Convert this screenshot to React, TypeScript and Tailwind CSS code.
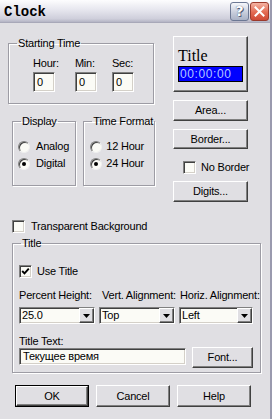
import React from 'react';

const raised =
  'border border-t-white border-l-white border-b-[#404040] border-r-[#404040] shadow-[inset_-1px_-1px_0_#808080]';
const sunken =
  'border border-t-[#808080] border-l-[#808080] border-b-white border-r-white shadow-[inset_1px_1px_0_#404040,inset_-1px_-1px_0_#d4d0c8]';
const etched = 'border border-[#9d9ca4] shadow-[1px_1px_0_#ffffff,inset_1px_1px_0_#ffffff]';

function Button({
  children,
  className = '',
  isDefault = false,
}: {
  children: React.ReactNode;
  className?: string;
  isDefault?: boolean;
}) {
  if (isDefault) {
    return (
      <div className={`border border-black ${className}`}>
        <button type="button" className={`w-full h-full flex items-center justify-center bg-[#e0dfe3] ${raised}`}>
          {children}
        </button>
      </div>
    );
  }
  return (
    <button type="button" className={`flex items-center justify-center bg-[#e0dfe3] ${raised} ${className}`}>
      {children}
    </button>
  );
}

function Check({ checked = false }: { checked?: boolean }) {
  return (
    <span className={`w-[13px] h-[13px] shrink-0 bg-[#fbfbf6] flex items-center justify-center ${sunken}`}>
      {checked && (
        <svg width="9" height="9" viewBox="0 0 9 9">
          <polyline points="1.2,4 3.5,6.4 7.8,1.6" fill="none" stroke="black" strokeWidth="1.9" />
        </svg>
      )}
    </span>
  );
}

function Radio({ label, checked = false, gap }: { label: string; checked?: boolean; gap: string }) {
  return (
    <div className={`flex items-center h-[13px] ${gap}`}>
      <span className="w-[12px] h-[12px] shrink-0 rounded-full bg-[#fbfbf6] border border-t-[#808080] border-l-[#808080] border-b-[#f0f0f0] border-r-[#f0f0f0] shadow-[inset_1px_1px_0_#404040] flex items-center justify-center">
        {checked && <span className="w-[4px] h-[4px] rounded-full bg-black" />}
      </span>
      <span>{label}</span>
    </div>
  );
}

function Field({ value, className = '' }: { value: string; className?: string }) {
  return (
    <div className={`bg-[#fbfbf6] flex items-center pl-[3px] ${sunken} ${className}`}>
      {value}
    </div>
  );
}

function Combo({ value, className = '' }: { value: string; className?: string }) {
  return (
    <div className={`h-[17px] bg-[#fbfbf6] flex items-stretch ${sunken} ${className}`}>
      <span className="flex-1 flex items-center pl-[2px]">{value}</span>
      <span className={`w-[15px] bg-[#e0dfe3] flex items-center justify-center ${raised}`}>
        <svg width="7" height="4" viewBox="0 0 7 4">
          <polygon points="0,0 7,0 3.5,4" fill="black" />
        </svg>
      </span>
    </div>
  );
}

function Group({
  title,
  className = '',
  inner = '',
  children,
}: {
  title: string;
  className?: string;
  inner?: string;
  children: React.ReactNode;
}) {
  return (
    <fieldset className={`${etched} ${className}`}>
      <legend className="ml-[8px] px-[1px] leading-[13px]">{title}</legend>
      <div className={inner}>{children}</div>
    </fieldset>
  );
}

export default function App() {
  return (
    <div className="w-[272px] h-[419px] overflow-hidden flex flex-col bg-[#e0dfe3] border-r-2 border-r-[#9a9aae] font-['Liberation_Sans',Arial,sans-serif] text-[11px] leading-[13px] tracking-[-0.2px] whitespace-nowrap text-black">
      {/* Title bar */}
      <div className="h-[23px] shrink-0 flex items-center justify-between pl-[4px] pr-[1px] bg-[linear-gradient(#fdfdfe,#e6e6ee_45%,#cfcfdb_85%,#b4b4c4)] border-b border-b-[#a8a8b8]">
        <span className="font-['Liberation_Mono',monospace] font-bold text-[14px] leading-[16px] tracking-normal mt-[1px]">Clock</span>
        <div className="flex items-center gap-[1px]">
          <span className="w-[19px] h-[19px] rounded-[3px] border border-[#6c7894] bg-[linear-gradient(#f6f7fb,#c4cad9_60%,#aab2c6)] flex items-center justify-center text-white font-bold text-[14px] font-['DejaVu_Sans',sans-serif] [text-shadow:0_0_1px_#2d3a5a,1px_1px_0_#56607a]">
            ?
          </span>
          <span className="w-[19px] h-[19px] rounded-[3px] border border-[#9c3a2c] bg-[linear-gradient(#f4b3a3,#e36a52_55%,#cf4a36)] flex items-center justify-center">
            <svg width="11" height="11" viewBox="0 0 11 11">
              <path d="M1.5 1.5 L9.5 9.5 M9.5 1.5 L1.5 9.5" stroke="white" strokeWidth="2" strokeLinecap="square" />
            </svg>
          </span>
        </div>
      </div>

      {/* Top section */}
      <div className="flex items-start mt-[13px]">
        <div className="ml-[8px] w-[147px] mt-[1px] flex flex-col">
          <Group title="Starting Time" className="w-[146px]" inner="pl-[24px] pt-[7px] pb-[11px]">
            <div className="flex">
              <div className="flex flex-col">
                <span>Hour:</span>
                <Field value="0" className="mt-[2px] w-[22px] h-[20px]" />
              </div>
              <div className="flex flex-col ml-[16px]">
                <span>Min:</span>
                <Field value="0" className="mt-[2px] w-[22px] h-[20px]" />
              </div>
              <div className="flex flex-col ml-[15px]">
                <span>Sec:</span>
                <Field value="0" className="mt-[2px] w-[22px] h-[20px]" />
              </div>
            </div>
          </Group>
          <div className="flex mt-[11px]">
            <Group title="Display" className="ml-[4px] w-[66px]" inner="pl-[5px] pt-[12px] pb-[15px]">
              <div className="flex flex-col gap-[4px]">
                <Radio label="Analog" gap="gap-[6px]" />
                <Radio label="Digital" gap="gap-[6px]" checked />
              </div>
            </Group>
            <Group title="Time Format" className="ml-[7px] w-[71px]" inner="pl-[6px] pt-[12px] pb-[15px]">
              <div className="flex flex-col gap-[4px]">
                <Radio label="12 Hour" gap="gap-[4px]" />
                <Radio label="24 Hour" gap="gap-[4px]" checked />
              </div>
            </Group>
          </div>
        </div>

        <div className="ml-[18px] w-[75px] flex flex-col">
          <button type="button" className={`h-[56px] bg-[#e0dfe3] flex flex-col items-start pl-[4px] pt-[10px] ${raised}`}>
            <span className="font-['Liberation_Serif',serif] text-[16px] leading-[18px] tracking-normal">Title</span>
            <span className="mt-[1px] w-[65px] h-[16px] bg-[#0000ff] border border-black flex items-center pl-[1px] text-[#b4c8ff] text-[12px] tracking-[0.6px]">
              00:00:00
            </span>
          </button>
          <Button className="mt-[8px] h-[21px]">Area...</Button>
          <Button className="mt-[8px] h-[20px]">Border...</Button>
          <div className="mt-[12px] ml-[10px] flex items-center gap-[5px] h-[13px]">
            <Check />
            <span>No Border</span>
          </div>
          <Button className="mt-[7px] h-[21px]">Digits...</Button>
        </div>
      </div>

      {/* Transparent background */}
      <div className="mt-[18px] ml-[12px] flex items-center gap-[6px] h-[13px]">
        <Check />
        <span>Transparent Background</span>
      </div>

      {/* Title group */}
      <Group title="Title" className="mt-[4px] ml-[12px] w-[249px]" inner="pl-[6px] pt-[15px] pb-[4px]">
        <div className="flex items-center gap-[5px] h-[13px]">
          <Check checked />
          <span>Use Title</span>
        </div>
        <div className="flex mt-[11px]">
          <span className="w-[83px]">Percent Height:</span>
          <span className="w-[78px]">Vert. Alignment:</span>
          <span>Horiz. Alignment:</span>
        </div>
        <div className="flex gap-[4px] mt-[5px]">
          <Combo value="25.0" className="w-[76px]" />
          <Combo value="Top" className="w-[76px]" />
          <Combo value="Left" className="w-[74px]" />
        </div>
        <div className="flex items-start mt-[11px]">
          <div className="flex flex-col">
            <span>Title Text:</span>
            <Field value="Текущее время" className="w-[167px] h-[17px]" />
          </div>
          <Button className="ml-[6px] mt-[12px] w-[61px] h-[21px]">Font...</Button>
        </div>
      </Group>

      {/* Dialog buttons */}
      <div className="flex ml-[15px] mt-[12px] gap-[7px]">
        <Button isDefault className="w-[74px] h-[22px]">
          OK
        </Button>
        <Button className="w-[74px] h-[22px]">Cancel</Button>
        <Button className="w-[74px] h-[22px]">Help</Button>
      </div>
    </div>
  );
}
